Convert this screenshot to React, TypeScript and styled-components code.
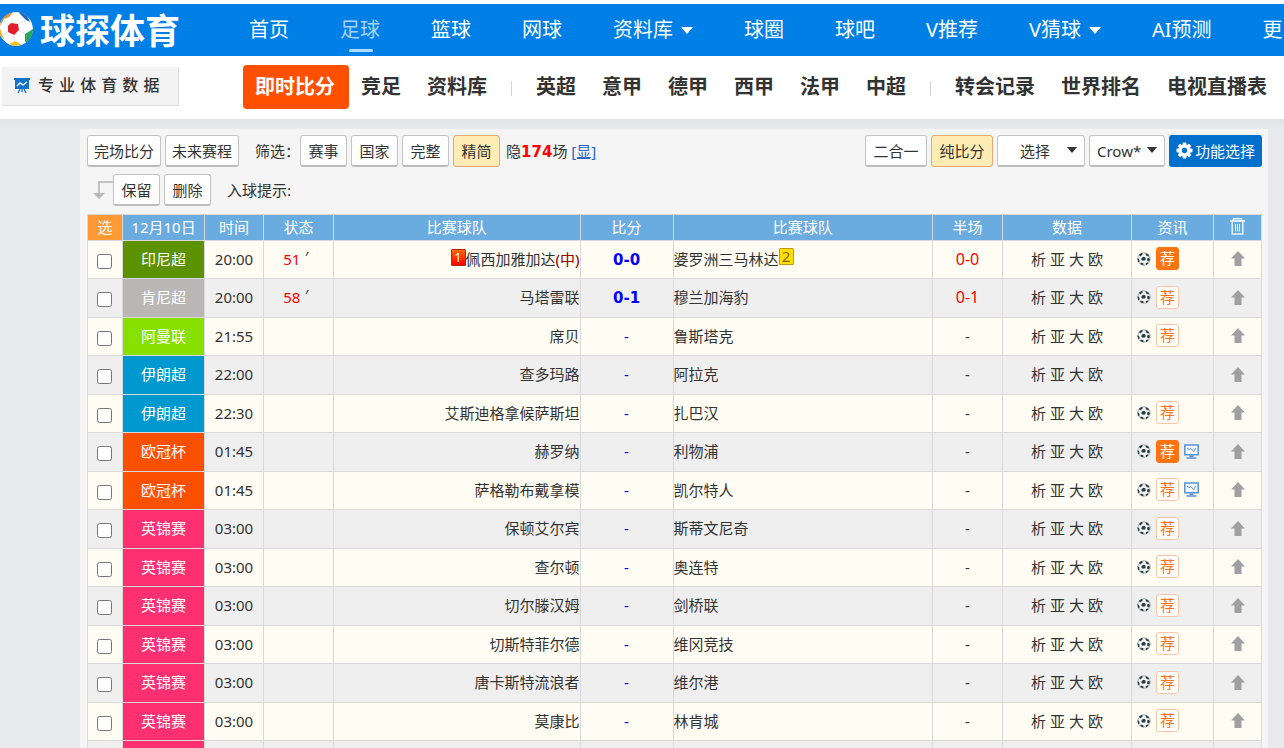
import React from 'react';
import styled, { createGlobalStyle, css } from 'styled-components';

const Global = createGlobalStyle`
  * { box-sizing: border-box; }
  body {
    margin: 0;
    background: #e8eaed;
    color: #333;
    font: 15px/20px "Noto Sans", "Noto Sans CJK SC", sans-serif;
    overflow: hidden;
  }
  a { color: inherit; text-decoration: none; }
  button, select, input { font: inherit; color: inherit; margin: 0; }
`;

const Page = styled.div`
  height: 100vh;
  overflow: hidden;
`;

const TopBar = styled.header`
  display: flex;
  align-items: center;
  height: 56px;
  border-top: 4px solid #fff;
  background: #0080e6;
  color: #fff;
  overflow: hidden;
`;

const Logo = styled.a`
  display: flex;
  align-items: center;
  gap: 6px;
  flex: 0 0 249px;
  font-size: 35px;
  line-height: 48px;
  font-weight: 700;
  font-family: "Noto Sans CJK SC", sans-serif;
  white-space: nowrap;
  padding-bottom: 2px;
`;

const TopNav = styled.nav`
  display: flex;
  gap: 51px;
  font-size: 20px;
  line-height: 54px;
  white-space: nowrap;
`;

const TopLink = styled.a<{ $active?: boolean }>`
  display: flex;
  align-items: center;
  gap: 8px;
  position: relative;
  flex: none;
  ${p => p.$active && css`
    color: #a6d3f7;
    &::after {
      content: "";
      position: absolute;
      left: 9px;
      right: 7px;
      bottom: 5px;
      height: 3px;
      border-radius: 2px;
      background: #a9dcff;
    }
  `}
`;

const SubBar = styled.div`
  display: flex;
  align-items: center;
  height: 63px;
  padding-bottom: 2px;
  background: #fff;
  overflow: hidden;
`;

const SloganBox = styled.div`
  flex: 0 0 243px;
  padding-left: 2px;
`;

const Slogan = styled.div`
  display: flex;
  align-items: center;
  gap: 8px;
  width: 177px;
  height: 39px;
  padding-left: 12px;
  background: #f3f3f3;
  border: solid #dedede;
  border-width: 0 1px 1px 0;
  font: 500 16px/38px "DejaVu Sans", "Noto Sans CJK SC", sans-serif;
  white-space: nowrap;
`;

const SubNav = styled.nav`
  display: flex;
  align-items: center;
  font-size: 20px;
  line-height: 44px;
  font-weight: 700;
  white-space: nowrap;
`;

const SubLink = styled.a<{ $active?: boolean }>`
  flex: none;
  padding: 0 14px 0 12px;
  ${p => p.$active && css`
    background: #ff5000;
    color: #fff;
    border-radius: 4px;
  `}
`;

const Divider = styled.span`
  flex: none;
  width: 1px;
  height: 15px;
  margin: 4px 12px 0 10px;
  background: #d4d4d4;
`;

const Backdrop = styled.div`
  padding: 10px 16px 0 80px;
  background: linear-gradient(#e3e3e4, #e8eaed 10px);
`;

const Panel = styled.main`
  padding: 6px 6px 0 7px;
  background: #f5f5f5;
`;

const Toolbar = styled.div<{ $second?: boolean }>`
  display: flex;
  align-items: center;
  gap: 4px;
  height: 32px;
  margin-bottom: ${p => (p.$second ? 8 : 7)}px;
  padding-left: ${p => (p.$second ? 6 : 0)}px;
  white-space: nowrap;
`;

const ToolButton = styled.button<{ $tone?: 'on' | 'primary'; $mid?: boolean }>`
  display: flex;
  align-items: center;
  justify-content: center;
  gap: 2px;
  height: 32px;
  min-width: ${p => (p.$mid ? 62 : 47)}px;
  padding: 0 6px;
  border: 1px solid #c4c4c4;
  border-bottom: 2px solid #bdbdbd;
  border-radius: 3px;
  background: #fff;
  cursor: pointer;
  ${p => p.$tone === 'on' && css`
    background: #ffecb5;
    border-color: #e5a877;
    border-bottom-width: 1px;
  `}
  ${p => p.$tone === 'primary' && css`
    background: #0070cc;
    border-color: #0070cc;
    color: #fff;
  `}
`;

const Spacer = styled.span`
  flex: 1;
`;

const Label = styled.span`
  padding-left: 12px;
`;

const Attached = styled.span`
  display: flex;
  align-items: center;
`;

const Hidden = styled.span`
  padding-left: 2px;
  b { font-family: "DejaVu Sans", sans-serif; color: #f00; }
  a { color: #2a62c9; text-decoration: underline; }
`;

const SelectBox = styled.span`
  display: flex;
  position: relative;
  svg { position: absolute; right: 8px; top: 12px; pointer-events: none; }
`;

const Select = styled.select<{ $wide?: boolean }>`
  appearance: none;
  width: ${p => (p.$wide ? 88 : 76)}px;
  height: 32px;
  padding: 0 0 0 ${p => (p.$wide ? 22 : 7)}px;
  border: 1px solid #c4c4c4;
  border-bottom: 2px solid #bdbdbd;
  border-radius: 3px;
  background: #fff;
`;

const Table = styled.table`
  width: 100%;
  table-layout: fixed;
  border-collapse: separate;
  border-spacing: 0;
  border: solid #d9d9d9;
  border-width: 1px 1px 0 0;
  th, td {
    padding: 0 0 2px;
    border: solid #d9d9d9;
    border-width: 0 0 1px 1px;
    text-align: center;
    white-space: nowrap;
    overflow: hidden;
  }
`;

const Col = styled.col<{ $w?: string }>`
  width: ${p => p.$w ?? 'auto'};
`;

const Head = styled.th<{ $pick?: boolean }>`
  height: 26px;
  font-weight: 400;
  color: #fff;
  background: ${p => (p.$pick ? '#ff9933' : '#6aabe0')};
  svg { display: block; margin: 0 auto; }
`;

const Row = styled.tr`
  height: 38px;
  background: #fffdf3;
  &:nth-child(even) { height: 39px; background: #efefef; }
`;

const Cell = styled.td`
  svg { display: block; margin: 0 auto; }
`;

const Check = styled.input`
  display: block;
  width: 15px;
  height: 15px;
  && { margin: 5px auto 0 9px; }
`;

const League = styled.td<{ $color: string }>`
  background: ${p => p.$color};
  color: #fff;
`;

const Home = styled.td`
  && { text-align: right; }
`;

const Away = styled.td`
  && { text-align: left; }
`;

const Minute = styled.span`
  padding-right: 6px;
  color: #f00;
  sup { color: #333; line-height: 0; margin-left: 4px; font-size: 15px; font-style: italic; vertical-align: 3px; }
`;

const Neutral = styled.span`
  color: #8b0000;
`;

const Card = styled.span<{ $yellow?: boolean }>`
  display: inline-block;
  width: 15px;
  height: 17px;
  border: 1px solid ${p => (p.$yellow ? '#c09a10' : '#b02a10')};
  border-radius: 1px;
  background: ${p => (p.$yellow ? '#ffde00' : 'linear-gradient(#ff6a00, #f80000)')};
  color: ${p => (p.$yellow ? '#8a6400' : '#fff')};
  font-size: ${p => (p.$yellow ? 15 : 12)}px;
  line-height: 15px;
  text-align: center;
  vertical-align: 3px;
`;

const Score = styled.td<{ $live?: boolean }>`
  color: #00f;
  ${p => p.$live && css`
    font-family: "DejaVu Sans", sans-serif;
    font-weight: 700;
    && { padding: 0; }
  `}
`;

const Half = styled.td<{ $live?: boolean }>`
  color: ${p => (p.$live ? '#f00' : '#333')};
  font-size: ${p => (p.$live ? 16 : 15)}px;
`;

const Info = styled.div`
  display: flex;
  align-items: center;
  gap: 5px;
  padding-left: 5px;
`;

const Tip = styled.a<{ $solid?: boolean }>`
  width: 23px;
  height: 23px;
  border: 1px solid ${p => (p.$solid ? '#ff7410' : '#ffc4a3')};
  border-radius: 3px;
  background: ${p => (p.$solid ? '#ff7410' : '#fff')};
  color: ${p => (p.$solid ? '#fff' : '#ff7410')};
  line-height: 20px;
  text-align: center;
`;

const Caret = ({ size = 10 }: { size?: number }) => (
  <svg width={size} height={size === 12 ? 7 : 6} viewBox="0 0 12 7" preserveAspectRatio="none" aria-hidden="true">
    <path d="M0 0h12L6 7z" fill="currentColor" />
  </svg>
);

const LogoBall = () => (
  <svg width="34" height="36" viewBox="0 0 34 36" aria-hidden="true">
    <defs><clipPath id="ball"><circle cx="16" cy="18" r="17" /></clipPath></defs>
    <g clipPath="url(#ball)">
      <circle cx="16" cy="18" r="17" fill="#fff" />
      <path d="M18 0q9 2 12 11l-4-2-6-6z" fill="#2765b8" />
      <path d="M25 23l8-5v9l-6 6-2-3z" fill="#28a461" />
      <path d="M9 33l6-3 6 3-3 4h-7z" fill="#f4c430" />
      <path d="M0 17l2 6 2 6-6-4z" fill="#f3b928" />
      <path d="M0 15l1-7 6-5 6-2-4 5-5 2z" fill="#e98c2e" />
      <path d="M11 12l7 1 1 6-5 5-6-3v-6z" fill="#e0202c" />
      <path d="M18 13l7-3M19 19l6 4M14 24l1 6M8 15l-4-5M8 21l-5 3" stroke="#dde3ea" strokeWidth="1" fill="none" />
    </g>
  </svg>
);

const BoardIcon = () => (
  <svg width="16" height="16" viewBox="0 0 16 16" aria-hidden="true">
    <path d="M0 0h16v2h-1v9H1V2H0z" fill="#1272c8" />
    <path d="M3 8l3-3 3 2 4-3" stroke="#fff" strokeWidth="1.4" fill="none" />
    <path d="M6 11l-2 4M10 11l2 4M8 11v3" stroke="#1272c8" strokeWidth="1.3" />
  </svg>
);

const ReturnArrow = () => (
  <svg width="20" height="18" viewBox="0 0 20 18" aria-hidden="true">
    <path d="M20 1H6v11" stroke="#c2c2c2" strokeWidth="2" fill="none" />
    <path d="M0 12h12l-6 6z" fill="#b8b8b8" />
  </svg>
);

const GearIcon = () => (
  <svg width="17" height="17" viewBox="-9 -9 18 18" aria-hidden="true">
    <g fill="#fff">
      {[0, 45, 90, 135].map(a => (
        <rect key={a} x="-2" y="-8.500" width="4" height="17" rx="1" transform={`rotate(${a})`} />
      ))}
      <circle r="6.500" />
    </g>
    <circle r="2.800" fill="#0070cc" />
  </svg>
);

const TrashIcon = () => (
  <svg width="15" height="17" viewBox="0 0 15 17" fill="none" stroke="#e6f2fc" aria-hidden="true">
    <path d="M0 3h15" strokeWidth="1.800" />
    <path d="M3.500 3V.8h8V3M2.200 3.500v12.500h10.600V3.500" strokeWidth="1.500" />
    <path d="M5.500 6v7.500M7.500 6v7.500M9.500 6v7.500" />
  </svg>
);

const BallIcon = () => (
  <svg width="14" height="14" viewBox="0 0 14 14" aria-hidden="true">
    <circle cx="7" cy="7" r="6.200" fill="#f4f8f8" stroke="#92a3a3" strokeWidth="0.900" />
    <path d="M4.600 6l1.800-1.300 2.200.9-.1 2.600-2.700.5-1.500-1.200zM1.800 2.800L5 .7l.8 1.500-2.400 2.200zM8.500 1l3.500 2-.6 1.700-2.600-1.400zM.5 6.200l1.600.8.6 2.600-1.500.7zM10.300 6.300l1.900-.6.7 2.200-1.200 1.600-1.600-1zM3.600 10.600l2.800.7v1.900l-3-.9zM8.600 11.300l2.200-.9.9.7-2.600 2.100z" fill="#2b3a3a" />
  </svg>
);

const ScreenIcon = () => (
  <svg width="15" height="15" viewBox="0 0 15 15" fill="none" stroke="#5b93d3" aria-hidden="true">
    <path d="M.8 1h13.400v9.800H.8z" fill="#f2f8ff" strokeWidth="1.500" />
    <path d="M3 4l2.500 1.500L7 4.500 9.500 7.500 12 4" strokeWidth="1" />
    <path d="M5.500 12.200h4" strokeWidth="1.600" />
    <path d="M2.500 14h10" strokeWidth="1.500" />
  </svg>
);

const UpArrow = () => (
  <svg width="14" height="15" viewBox="0 0 14 15" aria-hidden="true">
    <path d="M7 0l7 7.500h-3.500V15h-7V7.500H0z" fill="#a0a0a0" />
  </svg>
);

type Match = {
  league: string; color: string; time: string; minute?: string;
  home: string; away: string; score?: string; half?: string;
  neutral?: boolean; red?: number; yellow?: number;
  tip?: 'solid' | 'plain'; live?: boolean;
};

const PINK = '#ff3071';
const matches: Match[] = [
  { league: '印尼超', color: '#5c9200', time: '20:00', minute: '51', home: '佩西加雅加达', away: '婆罗洲三马林达', score: '0-0', half: '0-0', neutral: true, red: 1, yellow: 2, tip: 'solid' },
  { league: '肯尼超', color: '#bbb7b7', time: '20:00', minute: '58', home: '马塔雷联', away: '穆兰加海豹', score: '0-1', half: '0-1', tip: 'plain' },
  { league: '阿曼联', color: '#88e000', time: '21:55', home: '席贝', away: '鲁斯塔克', tip: 'plain' },
  { league: '伊朗超', color: '#0099cf', time: '22:00', home: '查多玛路', away: '阿拉克' },
  { league: '伊朗超', color: '#0099cf', time: '22:30', home: '艾斯迪格拿候萨斯坦', away: '扎巴汉', tip: 'plain' },
  { league: '欧冠杯', color: '#fb5000', time: '01:45', home: '赫罗纳', away: '利物浦', tip: 'solid', live: true },
  { league: '欧冠杯', color: '#fb5000', time: '01:45', home: '萨格勒布戴拿模', away: '凯尔特人', tip: 'plain', live: true },
  { league: '英锦赛', color: PINK, time: '03:00', home: '保顿艾尔宾', away: '斯蒂文尼奇', tip: 'plain' },
  { league: '英锦赛', color: PINK, time: '03:00', home: '查尔顿', away: '奥连特', tip: 'plain' },
  { league: '英锦赛', color: PINK, time: '03:00', home: '切尔滕汉姆', away: '剑桥联', tip: 'plain' },
  { league: '英锦赛', color: PINK, time: '03:00', home: '切斯特菲尔德', away: '维冈竞技', tip: 'plain' },
  { league: '英锦赛', color: PINK, time: '03:00', home: '唐卡斯特流浪者', away: '维尔港', tip: 'plain' },
  { league: '英锦赛', color: PINK, time: '03:00', home: '莫康比', away: '林肯城', tip: 'plain' },
  { league: '', color: PINK, time: '', home: '', away: '' },
];

const MatchRow = ({ m }: { m: Match }) => {
  if (!m.league) {
    return (
      <Row>
        <Cell /><League $color={m.color} /><Cell /><Cell /><Cell /><Cell /><Cell /><Cell /><Cell /><Cell /><Cell />
      </Row>
    );
  }
  return (
    <Row>
      <Cell><Check type="checkbox" aria-label={`${m.home} ${m.away}`} /></Cell>
      <League $color={m.color}>{m.league}</League>
      <Cell>{m.time}</Cell>
      <Cell>{m.minute && <Minute>{m.minute}<sup>′</sup></Minute>}</Cell>
      <Home>
        {m.red && <Card>{m.red}</Card>}
        <a href="#team">{m.home}</a>
        {m.neutral && <Neutral>(中)</Neutral>}
      </Home>
      <Score $live={!!m.score}>{m.score ?? '-'}</Score>
      <Away>
        <a href="#team">{m.away}</a>
        {m.yellow && <Card $yellow>{m.yellow}</Card>}
      </Away>
      <Half $live={!!m.half}>{m.half ?? '-'}</Half>
      <Cell>
        <a href="#analysis">析</a> <a href="#asian">亚</a> <a href="#total">大</a> <a href="#euro">欧</a>
      </Cell>
      <Away>
        {m.tip && (
          <Info>
            <BallIcon />
            <Tip href="#tips" $solid={m.tip === 'solid'}>荐</Tip>
            {m.live && <ScreenIcon />}
          </Info>
        )}
      </Away>
      <Cell><UpArrow /></Cell>
    </Row>
  );
};

const topLinks = ['首页', '足球', '篮球', '网球', '资料库', '球圈', '球吧', 'V推荐', 'V猜球', 'AI预测', '更'];
const subLinks = ['即时比分', '竞足', '资料库', '|', '英超', '意甲', '德甲', '西甲', '法甲', '中超', '|', '转会记录', '世界排名', '电视直播表'];
const widths = ['35px', '82px', '59px', '70px', '21%', '93px', undefined, '70px', '129px', '82px', '48px'];
const heads = ['选', '12月10日', '时间', '状态', '比赛球队', '比分', '比赛球队', '半场', '数据', '资讯'];

export default function App() {
  return (
    <Page>
      <Global />
      <TopBar>
        <Logo href="#home"><LogoBall />球探体育</Logo>
        <TopNav>
          {topLinks.map(t => (
            <TopLink key={t} href="#nav" $active={t === '足球'}>
              {t}
              {(t === '资料库' || t === 'V猜球') && <Caret size={12} />}
            </TopLink>
          ))}
        </TopNav>
      </TopBar>
      <SubBar>
        <SloganBox><Slogan><BoardIcon />专 业 体 育 数 据</Slogan></SloganBox>
        <SubNav>
          {subLinks.map((t, i) =>
            t === '|' ? <Divider key={i} /> : <SubLink key={i} href="#sub" $active={i === 0}>{t}</SubLink>
          )}
        </SubNav>
      </SubBar>
      <Backdrop>
        <Panel>
          <Toolbar>
            <ToolButton>完场比分</ToolButton>
            <ToolButton>未来赛程</ToolButton>
            <Attached><Label>筛选：</Label><ToolButton>赛事</ToolButton></Attached>
            <ToolButton>国家</ToolButton>
            <ToolButton>完整</ToolButton>
            <ToolButton $tone="on">精简</ToolButton>
            <Hidden>隐<b>174</b>场 <a href="#show">[显]</a></Hidden>
            <Spacer />
            <ToolButton $mid>二合一</ToolButton>
            <ToolButton $mid $tone="on">纯比分</ToolButton>
            <SelectBox>
              <Select $wide aria-label="选择"><option>选择</option></Select>
              <Caret />
            </SelectBox>
            <SelectBox>
              <Select aria-label="Crow*"><option>Crow*</option></Select>
              <Caret />
            </SelectBox>
            <ToolButton $tone="primary"><GearIcon />功能选择</ToolButton>
          </Toolbar>
          <Toolbar $second>
            <Attached><ReturnArrow /><ToolButton>保留</ToolButton></Attached>
            <ToolButton>删除</ToolButton>
            <Label>入球提示:</Label>
          </Toolbar>
          <Table>
            <colgroup>{widths.map((w, i) => <Col key={i} $w={w} />)}</colgroup>
            <thead>
              <tr>
                {heads.map((h, i) => <Head key={i} $pick={i === 0}>{h}</Head>)}
                <Head aria-label="删除"><TrashIcon /></Head>
              </tr>
            </thead>
            <tbody>
              {matches.map((m, i) => <MatchRow key={i} m={m} />)}
            </tbody>
          </Table>
        </Panel>
      </Backdrop>
    </Page>
  );
}
